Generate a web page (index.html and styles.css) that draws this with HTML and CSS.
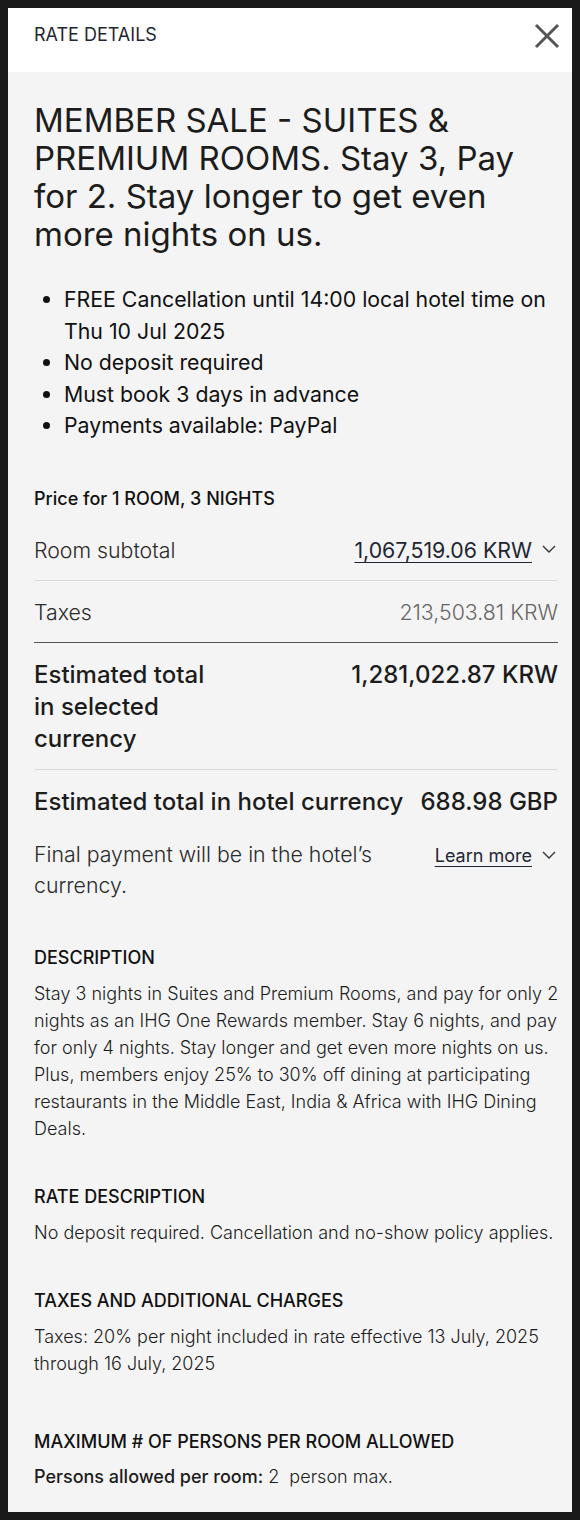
FILE: index.html
```html
<!DOCTYPE html>
<html>

	<head>
		<meta charset="utf-8" />
		<title>Rate details</title>
		<link rel="stylesheet" href="styles.css">
	</head>

	<body>
		<div id="panel">
			<div class="head">
				<span class="head-title">RATE DETAILS</span>
				<svg class="close" width="26" height="26" viewBox="0 0 26 26">
					<path d="M2 2 L24 24 M24 2 L2 24" stroke="#555" stroke-width="3" fill="none" />
				</svg>
			</div>
			<div class="content">
				<h1 class="rate-name">MEMBER SALE - SUITES &amp; PREMIUM ROOMS. Stay 3, Pay for 2. Stay longer to get even more nights on us.</h1>
				<ul class="perks">
					<li>FREE Cancellation until 14:00 local hotel time on Thu 10 Jul 2025</li>
					<li>No deposit required</li>
					<li>Must book 3 days in advance</li>
					<li>Payments available: PayPal</li>
				</ul>

				<p class="price-for">Price for 1 ROOM, 3 NIGHTS</p>
				<div class="row">
					<span class="lbl">Room subtotal</span>
					<span class="val link"><u>1,067,519.06 KRW</u>
						<svg class="chev" width="14" height="9" viewBox="0 0 14 9"><path d="M1 1 L7 7 L13 1" stroke="#333" stroke-width="1.4" fill="none" /></svg>
					</span>
				</div>
				<div class="row dark-line">
					<span class="lbl">Taxes</span>
					<span class="val grey">213,503.81 KRW</span>
				</div>
				<div class="row total">
					<span class="lbl big">Estimated total<br>in selected<br>currency</span>
					<span class="val big">1,281,022.87 KRW</span>
				</div>
				<div class="row total no-line">
					<span class="lbl big">Estimated total in hotel currency</span>
					<span class="val big">688.98 GBP</span>
				</div>
				<div class="final">
					<span class="lbl">Final payment will be in the hotel’s currency.</span>
					<span class="learn"><u>Learn more</u>
						<svg class="chev" width="14" height="9" viewBox="0 0 14 9"><path d="M1 1 L7 7 L13 1" stroke="#333" stroke-width="1.4" fill="none" /></svg>
					</span>
				</div>

				<h2 class="sec first">DESCRIPTION</h2>
				<p class="txt">Stay 3 nights in Suites and Premium Rooms, and pay for only 2 nights as an IHG One Rewards member. Stay 6 nights, and pay for only 4 nights. Stay longer and get even more nights on us. Plus, members enjoy 25% to 30% off dining at participating restaurants in the Middle East, India &amp; Africa with IHG Dining Deals.</p>

				<h2 class="sec">RATE DESCRIPTION</h2>
				<p class="txt">No deposit required. Cancellation and no-show policy applies.</p>

				<h2 class="sec">TAXES AND ADDITIONAL CHARGES</h2>
				<p class="txt">Taxes: 20% per night included in rate effective 13 July, 2025 through 16 July, 2025</p>

				<h2 class="sec last">MAXIMUM # OF PERSONS PER ROOM ALLOWED</h2>
				<p class="txt tight"><b>Persons allowed per room:</b> 2&nbsp; person max.</p>
			</div>
		</div>
	</body>

</html>
```

FILE: styles.css
```css
* {
	padding: 0px;
	margin: 0px;
	box-sizing: border-box;
}

body {
	background: #1a1a1a;
	margin: 8px;
	font-family: Inter, "Noto Sans", sans-serif;
	color: #1c1c1c;
}

#panel {
	width: 564px;
	height: 1504px;
	background: #f4f4f4;
	overflow: hidden;
}

.head {
	height: 64px;
	background: #fff;
	display: flex;
	align-items: flex-start;
	justify-content: space-between;
	padding: 15px 12px 0 26px;
}

.head-title {
	font-size: 18px;
	line-height: 24px;
	color: #1e2633;
}

.content {
	padding: 29px 14px 0 26px;
}

.rate-name {
	font-size: 33px;
	line-height: 38px;
	font-weight: 400;
	color: #1c1c1c;
}

.perks {
	margin-top: 31px;
	padding-left: 30px;
	list-style: disc;
	font-size: 21.3px;
	line-height: 31.5px;
	color: #111;
}

.price-for {
	margin-top: 45px;
	font-size: 18px;
	line-height: 24px;
	font-weight: 500;
	color: #111;
}

.row {
	display: flex;
	justify-content: space-between;
	align-items: flex-start;
	padding: 16px 0 15px;
	border-bottom: 1px solid #dcdcdc;
	line-height: 30px;
}

.price-for + .row {
	margin-top: 8px;
}

.dark-line {
	border-bottom-color: #555;
}

.lbl {
	font-size: 21.3px;
	font-weight: 300;
	color: #2a2a2a;
}

.val {
	font-size: 21.3px;
	display: flex;
	align-items: center;
	gap: 10px;
}

.link {
	color: #1e2633;
	margin-right: 2px;
}

.link u,
.learn u {
	text-underline-offset: 4px;
	text-decoration-thickness: 1px;
}

.grey {
	color: #666;
	font-weight: 300;
}

.total {
	padding: 16px 0 14px;
	line-height: 32px;
}

.big {
	font-size: 24px;
	font-weight: 500;
	color: #1c1c1c;
}

.no-line {
	border-bottom: none;
}

.final {
	display: flex;
	justify-content: space-between;
	align-items: flex-start;
	margin-top: 7px;
	line-height: 31px;
}

.final .lbl {
	width: 360px;
}

.learn {
	font-size: 18px;
	color: #1e2633;
	display: flex;
	align-items: center;
	gap: 10px;
	padding-top: 1px;
	margin-right: 2px;
}

.sec {
	font-size: 18px;
	line-height: 24px;
	font-weight: 500;
	color: #111;
	margin-top: 43px;
}

.sec.first {
	margin-top: 45px;
}

.sec.last {
	margin-top: 53px;
}

.txt {
	margin-top: 10px;
	margin-right: -4px;
	font-size: 18px;
	line-height: 27px;
	font-weight: 300;
	color: #1c1c1c;
}

.txt.tight {
	margin-top: 9px;
}

.txt b {
	font-weight: 500;
}
```
